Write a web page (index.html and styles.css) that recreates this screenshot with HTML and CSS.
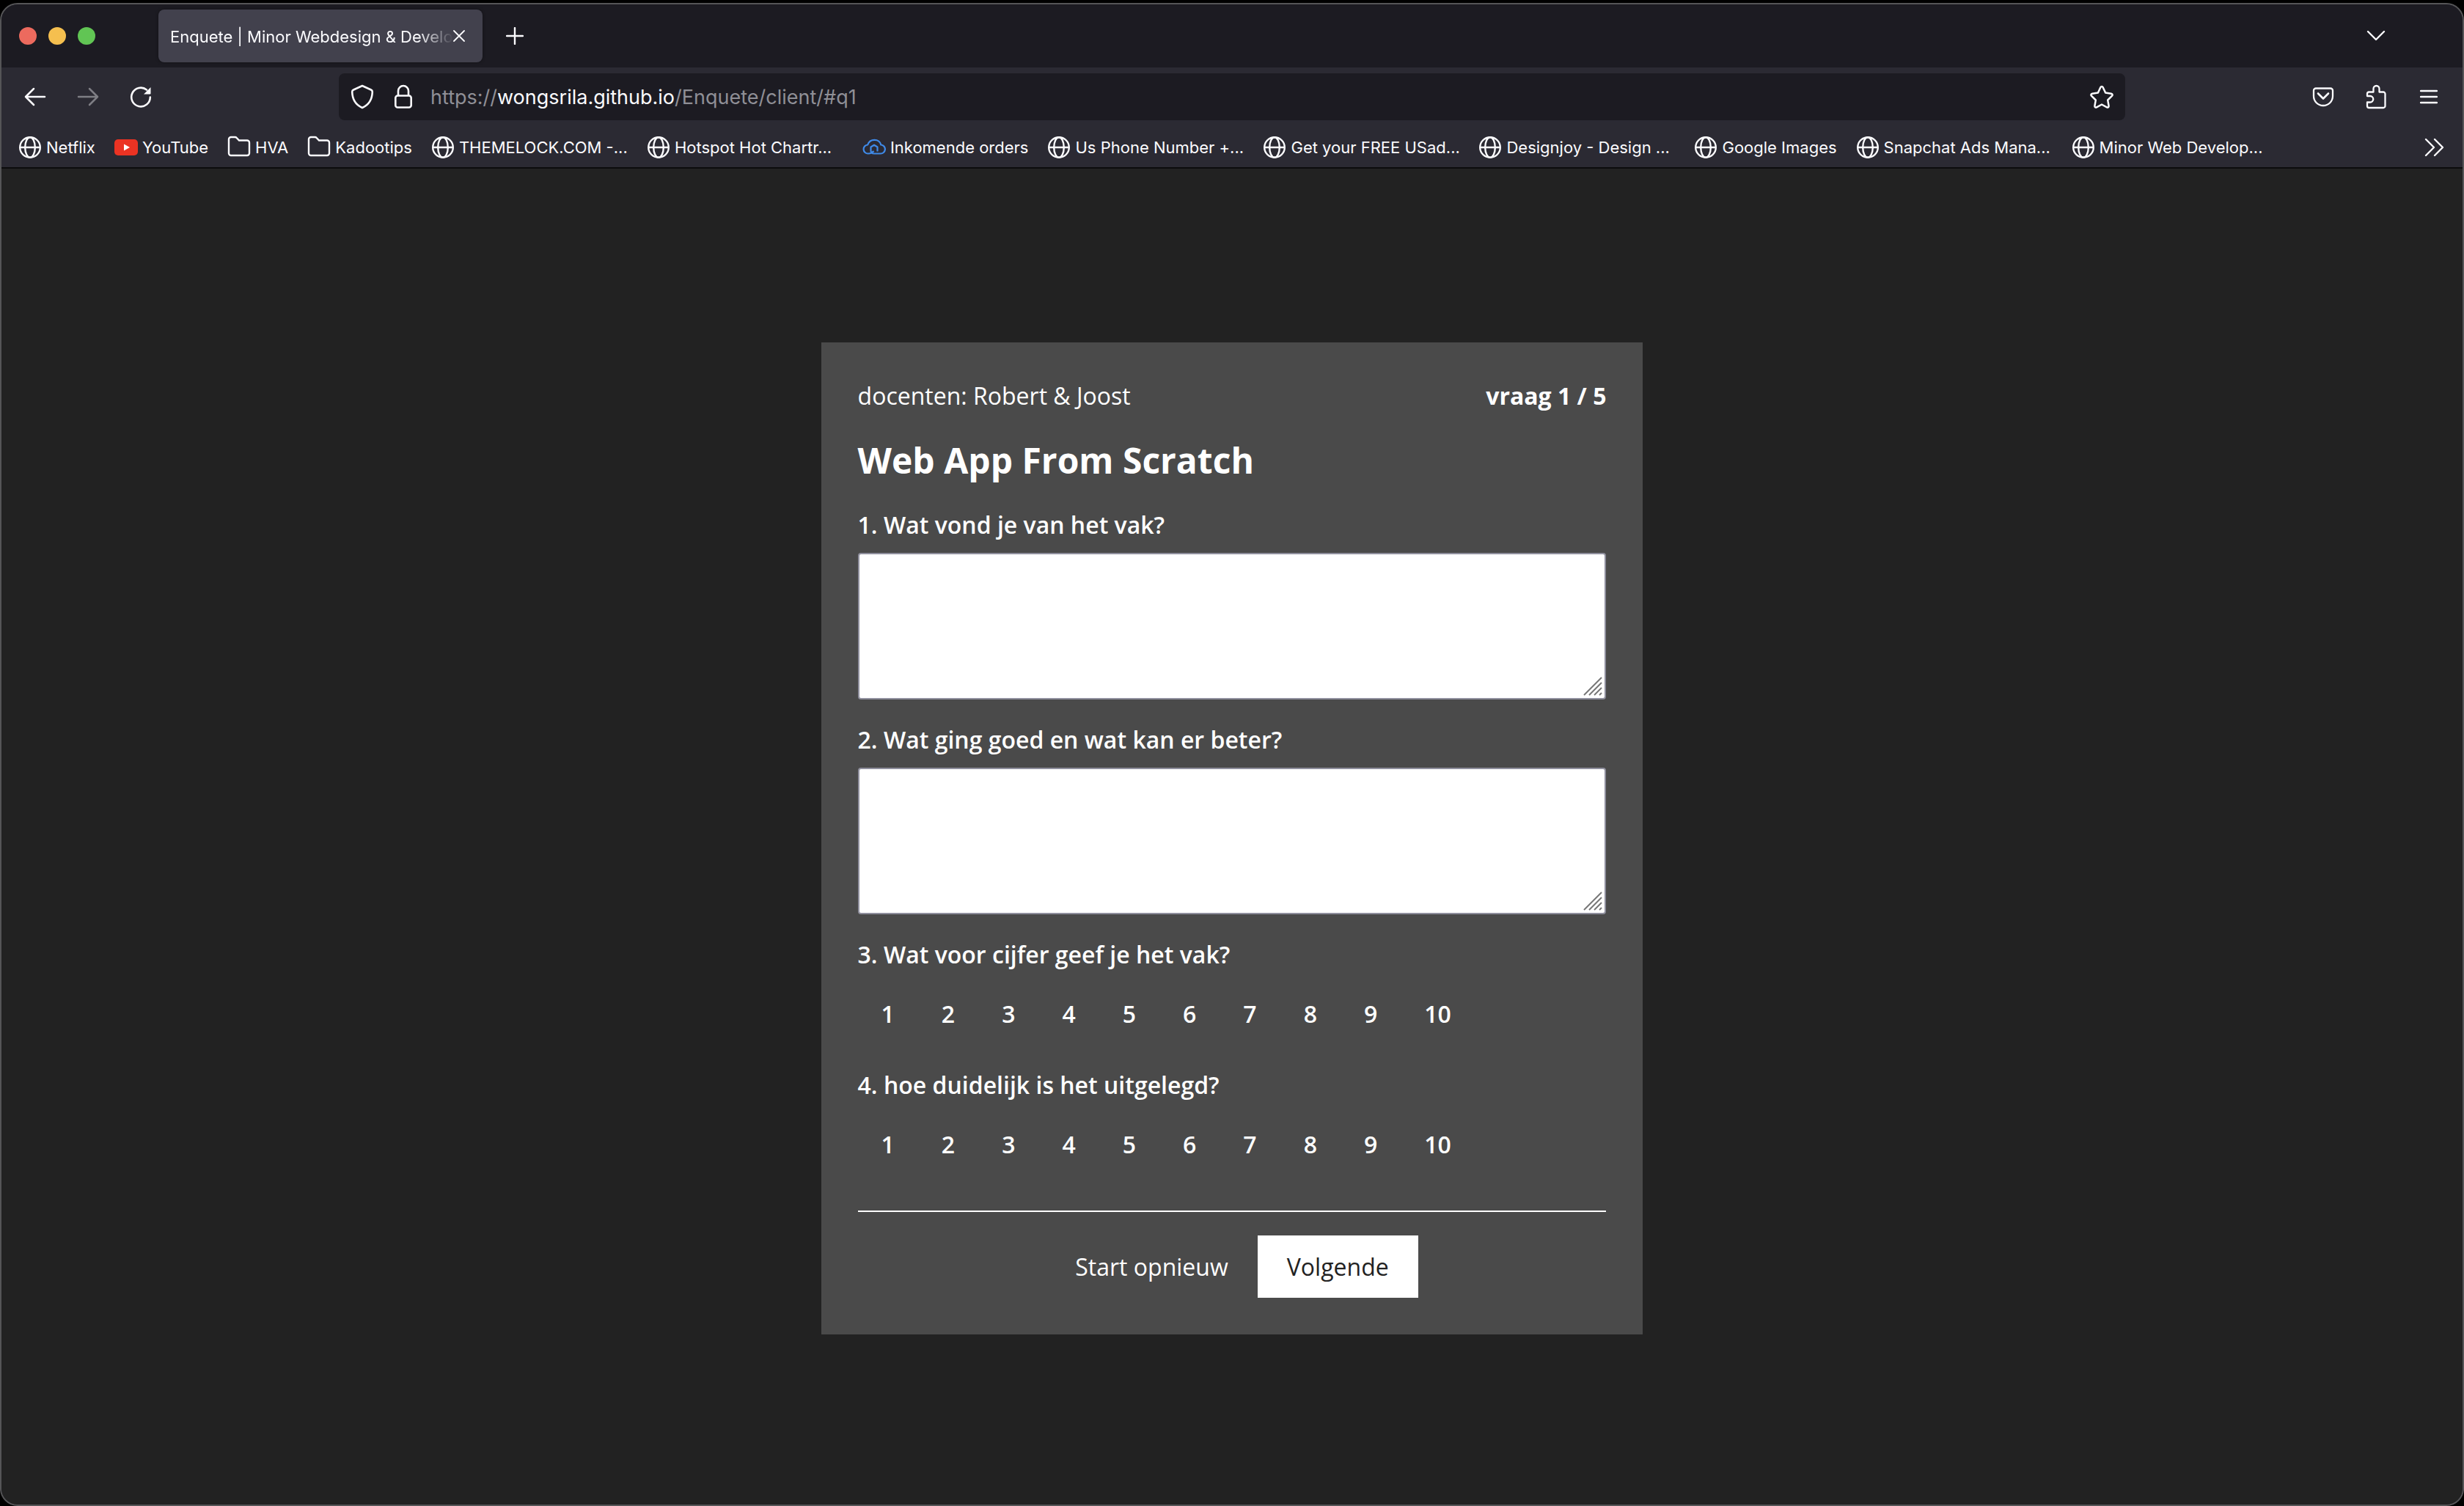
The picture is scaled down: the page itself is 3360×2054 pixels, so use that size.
FILE: index.html
```html
<!DOCTYPE html>
<html lang="nl">
<head>
<meta charset="utf-8">
<title>Enquete | Minor Webdesign &amp; Development</title>
<link rel="stylesheet" href="styles.css">
</head>
<body>
<svg class="sprite" aria-hidden="true">
  <symbol id="globe" viewBox="0 0 32 32"><g fill="none" stroke="currentColor" stroke-width="2.400"><circle cx="16" cy="16" r="13.800"/><ellipse cx="16" cy="16" rx="6.800" ry="13.800"/><path d="M2.200 16h27.600"/></g></symbol>
  <symbol id="folder" viewBox="0 0 32 32"><path d="M2 24V5a3 3 0 0 1 3-3h5.500a3 3 0 0 1 2.200 1L16 6.500h11a3 3 0 0 1 3 3V24a3 3 0 0 1-3 3H5a3 3 0 0 1-3-3z" fill="none" stroke="currentColor" stroke-width="2.400"/></symbol>
</svg>
<div class="window">
  <header class="tabs">
    <div class="lights"><span class="light red"></span><span class="light yellow"></span><span class="light green"></span></div>
    <div class="tab">
      <span class="tab-title">Enquete | Minor Webdesign &amp; Development</span>
      <button class="tab-close" aria-label="Sluit tabblad"><svg width="16" height="16" viewBox="0 0 16 16"><path d="M1 1l14 14M15 1L1 15" stroke="currentColor" stroke-width="1.800" stroke-linecap="round"/></svg></button>
    </div>
    <button class="icon-button new-tab" aria-label="Nieuw tabblad"><svg width="24" height="24" viewBox="0 0 24 24"><path d="M12 1v22M1 12h22" stroke="currentColor" stroke-width="2.400" stroke-linecap="round"/></svg></button>
    <button class="icon-button all-tabs" aria-label="Alle tabbladen"><svg width="26" height="16" viewBox="0 0 26 16"><path d="M2 2l11 11L24 2" fill="none" stroke="currentColor" stroke-width="2.400" stroke-linecap="round" stroke-linejoin="round"/></svg></button>
  </header>

  <nav class="toolbar">
    <div class="buttons">
      <button class="icon-button" aria-label="Terug"><svg width="32" height="32" viewBox="0 0 32 32"><path d="M14 5L3 16l11 11M3 16h26" fill="none" stroke="currentColor" stroke-width="2.500" stroke-linecap="round" stroke-linejoin="round"/></svg></button>
      <button class="icon-button" aria-label="Vooruit" disabled><svg width="32" height="32" viewBox="0 0 32 32"><path d="M18 5l11 11-11 11M29 16H3" fill="none" stroke="currentColor" stroke-width="2.500" stroke-linecap="round" stroke-linejoin="round"/></svg></button>
      <button class="icon-button" aria-label="Vernieuwen"><svg width="32" height="32" viewBox="0 0 32 32"><path d="M28.800 16.500A12.800 12.800 0 1 1 24 6.500" fill="none" stroke="currentColor" stroke-width="2.600" stroke-linecap="round"/><path d="M29.500 3v8.500a1 1 0 0 1-1 1H20z" fill="currentColor"/></svg></button>
    </div>
    <div class="spring"></div>
    <div class="address">
      <svg class="shield" width="32" height="34" viewBox="0 0 32 34"><path d="M16 2l12 5.500a3 3 0 0 1 1.800 2.800C29.500 21 24 28.500 16 32 8 28.500 2.500 21 2.200 10.300A3 3 0 0 1 4 7.500z" fill="none" stroke="currentColor" stroke-width="2.600" stroke-linejoin="round"/></svg>
      <svg class="lock" width="26" height="34" viewBox="0 0 26 34"><path d="M6 16V9a7 7 0 0 1 14 0v7" fill="none" stroke="currentColor" stroke-width="2.600"/><rect x="2.300" y="15.500" width="21.400" height="16" rx="3" fill="none" stroke="currentColor" stroke-width="2.600"/></svg>
      <label class="url"><span>https://</span><input class="url-host" type="text" value="wongsrila.github.io" aria-label="Adres"><span>/Enquete/client/#q1</span></label>
      <button class="star" aria-label="Bladwijzer toevoegen"><svg width="34" height="34" viewBox="0 0 34 34"><path d="M17 3c.7 0 1.300.4 1.600 1l3.500 7.500 8 1.200c1.500.2 2 2 1 3L25.200 21.500l1.400 8c.2 1.500-1.200 2.500-2.500 1.800L17 27.500l-7.100 3.800c-1.300.7-2.700-.3-2.500-1.800l1.400-8L2.900 15.700c-1-1-.5-2.800 1-3l8-1.200L15.400 4c.3-.6.900-1 1.600-1z" fill="none" stroke="currentColor" stroke-width="2.500" stroke-linejoin="round"/></svg></button>
    </div>
    <div class="spring"></div>
    <div class="buttons">
      <button class="icon-button" aria-label="Pocket"><svg width="32" height="32" viewBox="0 0 32 32"><path d="M6 4.500h20a3 3 0 0 1 3 3V15a13 13 0 0 1-26 0V7.500a3 3 0 0 1 3-3z" fill="none" stroke="currentColor" stroke-width="2.300"/><path d="M9 11.500l7 7 7-7" fill="none" stroke="currentColor" stroke-width="2.600" stroke-linecap="round" stroke-linejoin="round"/></svg></button>
      <button class="icon-button" aria-label="Extensies"><svg width="32" height="34" viewBox="0 0 32 34"><path d="M6 10.500h6.500V6a4 4 0 0 1 8 0v4.500H26a2.500 2.500 0 0 1 2.500 2.500v16.500A2.500 2.500 0 0 1 26 32H6.500A2.500 2.500 0 0 1 4 29.500V24.500h4a4 4 0 0 0 0-8.500H4v-3a2.500 2.500 0 0 1 2-2.500z" fill="none" stroke="currentColor" stroke-width="2.300" stroke-linejoin="round"/></svg></button>
      <button class="icon-button" aria-label="Menu"><svg width="24" height="20" viewBox="0 0 24 20"><path d="M1 2h22M1 10h22M1 18h22" stroke="currentColor" stroke-width="2.300" stroke-linecap="round"/></svg></button>
    </div>
  </nav>

  <nav class="bookmarks">
    <a href="#"><svg><use href="#globe"/></svg>Netflix</a>
    <a href="#"><svg viewBox="0 0 32 32"><rect y="5" width="32" height="22" rx="5" fill="#eb3323"/><path d="M13 11.500v9l8-4.500z" fill="#fff"/></svg>YouTube</a>
    <a href="#"><svg><use href="#folder"/></svg>HVA</a>
    <a href="#"><svg><use href="#folder"/></svg>Kadootips</a>
    <a class="long" href="#"><svg><use href="#globe"/></svg>THEMELOCK.COM -...</a>
    <a class="long" href="#"><svg><use href="#globe"/></svg>Hotspot Hot Chartr...</a>
    <a href="#"><svg viewBox="0 0 32 32"><path d="M20.500 21.500V15.500L16 12.800l-4.500 2.700v5c0 2.300 1.800 4 4.500 4h8.500a6 6 0 0 0 .8-12C24.500 8.500 20.800 5.800 16.500 5.800s-8 2.700-9.300 6.700A6 6 0 0 0 8 24.500c3.200 0 5.500-1.300 7.500-3.500" fill="none" stroke="#3f8ae8" stroke-width="2.200" stroke-linejoin="round"/></svg>Inkomende orders</a>
    <a class="long" href="#"><svg><use href="#globe"/></svg>Us Phone Number +...</a>
    <a class="long" href="#"><svg><use href="#globe"/></svg>Get your FREE USad...</a>
    <a class="long" href="#"><svg><use href="#globe"/></svg>Designjoy - Design ...</a>
    <a href="#"><svg><use href="#globe"/></svg>Google Images</a>
    <a class="long" href="#"><svg><use href="#globe"/></svg>Snapchat Ads Mana...</a>
    <a class="long" href="#"><svg><use href="#globe"/></svg>Minor Web Develop...</a>
    <button class="more" aria-label="Meer bladwijzers"><svg viewBox="0 0 32 32"><path d="M5 5l11 11L5 27M17 5l11 11-11 11" fill="none" stroke="currentColor" stroke-width="2.400" stroke-linecap="round" stroke-linejoin="round"/></svg></button>
  </nav>

  <main class="page">
    <form class="card">
      <div class="meta"><span>docenten: Robert &amp; Joost</span><strong>vraag 1 / 5</strong></div>
      <h1>Web App From Scratch</h1>
      <div class="question">
        <label class="prompt" for="a1">1. Wat vond je van het vak?</label>
        <div class="answer"><textarea id="a1"></textarea><svg class="grip" width="26" height="26" viewBox="0 0 26 26"><path d="M1 25L25 1M8 25L25 8M15 25l10-10M22 25l3-3" stroke="#777" stroke-width="2"/></svg></div>
      </div>
      <div class="question">
        <label class="prompt" for="a2">2. Wat ging goed en wat kan er beter?</label>
        <div class="answer"><textarea id="a2"></textarea><svg class="grip" width="26" height="26" viewBox="0 0 26 26"><path d="M1 25L25 1M8 25L25 8M15 25l10-10M22 25l3-3" stroke="#777" stroke-width="2"/></svg></div>
      </div>
      <fieldset class="question">
        <legend class="prompt">3. Wat voor cijfer geef je het vak?</legend>
        <div class="grades">
          <label><input type="radio" name="q3" value="1">1</label><label><input type="radio" name="q3" value="2">2</label><label><input type="radio" name="q3" value="3">3</label><label><input type="radio" name="q3" value="4">4</label><label><input type="radio" name="q3" value="5">5</label><label><input type="radio" name="q3" value="6">6</label><label><input type="radio" name="q3" value="7">7</label><label><input type="radio" name="q3" value="8">8</label><label><input type="radio" name="q3" value="9">9</label><label><input type="radio" name="q3" value="10">10</label>
        </div>
      </fieldset>
      <fieldset class="question">
        <legend class="prompt">4. hoe duidelijk is het uitgelegd?</legend>
        <div class="grades">
          <label><input type="radio" name="q4" value="1">1</label><label><input type="radio" name="q4" value="2">2</label><label><input type="radio" name="q4" value="3">3</label><label><input type="radio" name="q4" value="4">4</label><label><input type="radio" name="q4" value="5">5</label><label><input type="radio" name="q4" value="6">6</label><label><input type="radio" name="q4" value="7">7</label><label><input type="radio" name="q4" value="8">8</label><label><input type="radio" name="q4" value="9">9</label><label><input type="radio" name="q4" value="10">10</label>
        </div>
      </fieldset>
      <div class="actions"><button class="action" type="reset">Start opnieuw</button><button class="action primary" type="button">Volgende</button></div>
    </form>
  </main>
</div>
</body>
</html>
```

FILE: styles.css
```css
* { box-sizing: border-box; }

body {
  margin: 0;
  padding-top: 4px;
  min-height: 100vh;
  display: flex;
  background: #000;
  color: #fbfbfe;
  font: 22px/28px Inter, "Liberation Sans", sans-serif;
}

button {
  padding: 0;
  border: 0;
  background: none;
  color: inherit;
  font: inherit;
}

svg { display: block; flex: none; }
.sprite { position: absolute; width: 0; height: 0; }

.window {
  flex: 1;
  min-width: 0;
  display: flex;
  flex-direction: column;
  border: 2px solid #555557;
  border-radius: 24px;
  overflow: hidden;
  background: #2b2a33;
}

/* Tab strip */
.tabs {
  display: flex;
  align-items: center;
  height: 86px;
  padding: 0 76px 0 24px;
  background: #1c1b22;
}
.lights { display: flex; gap: 16px; margin-right: 86px; }
.light { width: 24px; height: 24px; border-radius: 50%; }
.red { background: #ec6a5e; }
.yellow { background: #f5bf4f; }
.green { background: #61c554; }
.tab {
  display: flex;
  align-items: center;
  width: 442px;
  height: 72px;
  padding: 0 24px 0 16px;
  border-radius: 8px;
  background: #42414d;
  box-shadow: 0 0 4px #0006;
}
.tab-title {
  flex: 1;
  padding-top: 2px;
  overflow: hidden;
  white-space: nowrap;
  mask-image: linear-gradient(to left, transparent, #000 48px);
}
.icon-button {
  display: grid;
  place-items: center;
  width: 64px;
  height: 64px;
}
.icon-button:disabled { opacity: 0.4; }
.new-tab { margin-left: 12px; }
.all-tabs { margin-left: auto; margin-right: 10px; }

/* Navigation toolbar */
.toolbar { display: flex; align-items: center; height: 80px; padding: 0 14px; }
.buttons { display: flex; gap: 8px; }
.spring { flex: 0 1 238px; }
.address {
  flex: 1;
  display: flex;
  align-items: center;
  height: 64px;
  padding: 0 15px 0 16px;
  border-radius: 8px;
  background: #1c1b22;
}
.lock { margin: 0 24px 0 27px; }
.url { flex: 1; display: flex; padding-top: 2px; color: #8f8f96; font-size: 27px; line-height: 32px; }
.url-host {
  field-sizing: content;
  padding: 0;
  border: 0;
  background: none;
  color: #fbfbfe;
  font: inherit;
}

/* Bookmarks bar */
.bookmarks {
  display: flex;
  align-items: center;
  gap: 26px;
  height: 58px;
  padding: 2px 23px 0;
  border-bottom: 2px solid #0c0c0d;
  white-space: nowrap;
}
.bookmarks a {
  display: flex;
  align-items: center;
  gap: 6px;
  color: inherit;
  text-decoration: none;
}
.bookmarks svg { width: 32px; height: 32px; }
.bookmarks .long { width: 268px; }
.more { margin-left: auto; }

/* Survey page */
.page {
  flex: 1;
  display: grid;
  place-items: center;
  padding-top: 4px;
  background: #222;
  color: #fff;
  font: 32px/44px "Open Sans", "Noto Sans", sans-serif;
}
.card {
  display: flex;
  flex-direction: column;
  gap: 33px;
  width: 33.4%;
  padding: 51px 50px 50px;
  background: #4a4a4a;
}
.meta { display: flex; justify-content: space-between; }
h1 { margin: 0; font-size: 48px; line-height: 66px; }
.question { margin: 0; padding: 0; border: 0; }
.prompt { display: block; margin-bottom: 16px; padding: 0; font-weight: 600; }
.answer { position: relative; }
.answer textarea {
  display: block;
  width: 100%;
  height: 200px;
  border: 2px solid #8f8f9d;
  border-radius: 4px;
  background: #fff;
  font: inherit;
  resize: none;
}
.grip { position: absolute; right: 5px; bottom: 5px; pointer-events: none; }
.grades { display: flex; font-weight: 600; }
.grades label { padding: 21px 32px 20px; }
.grades input { position: absolute; opacity: 0; pointer-events: none; }
.actions {
  display: flex;
  justify-content: center;
  margin-top: 15px;
  padding-top: 32px;
  border-top: 2px solid #fff;
}
.action { padding: 21px 40px 20px; }
.primary { background: #fff; color: #222; }
```
